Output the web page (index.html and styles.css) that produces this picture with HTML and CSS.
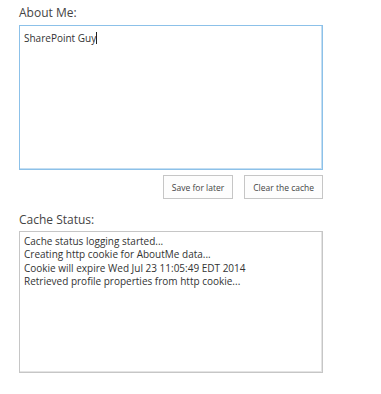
FILE: index.html
```html
<!DOCTYPE html>
<html lang="en">
<head>
    <meta charset="UTF-8">
    <title>About Me</title>
    <link rel="stylesheet" href="styles.css">
</head>
<body>
    <section class="panel">
        <div class="field-label">About Me:</div>
        <div class="about-box">SharePoint Guy<span class="caret"></span></div>
        <div class="actions">
            <button class="btn">Save for later</button>
            <button class="btn">Clear the cache</button>
        </div>
        <div class="field-label status-label">Cache Status:</div>
        <div class="status-box">
            <div>Cache status logging started...</div>
            <div>Creating http cookie for AboutMe data...</div>
            <div>Cookie will expire Wed Jul 23 11:05:49 EDT 2014</div>
            <div>Retrieved profile properties from http cookie...</div>
        </div>
    </section>
</body>
</html>
```

FILE: styles.css
```css
body {
    margin: 0;
    background-color: #fff;
    font-family: "Open Sans", sans-serif;
    color: #444;
}
.panel {
    width: 304px;
    padding: 5px 0 0 19px;
}
.field-label {
    font-size: 12px;
    line-height: 16px;
    color: #444;
    margin-bottom: 4px;
}
.about-box {
    box-sizing: border-box;
    height: 145px;
    border: 1px solid #8cc1e9;
    box-shadow: inset -1px -1px 0 #c4def2;
    padding: 5px 4px;
    font-size: 10px;
    line-height: 14px;
    color: #333;
}
.caret {
    display: inline-block;
    width: 1px;
    height: 12px;
    background-color: #222;
    vertical-align: -2px;
}
.actions {
    display: flex;
    justify-content: flex-end;
    gap: 11px;
    margin-top: 5px;
}
.btn {
    box-sizing: border-box;
    height: 24px;
    margin: 0;
    padding: 0 8px;
    background-color: #fdfdfd;
    border: 1px solid #c6c6c6;
    font-family: "Open Sans", sans-serif;
    font-size: 8.5px;
    color: #444;
}
.status-label {
    margin-top: 13px;
    margin-bottom: 3px;
}
.status-box {
    box-sizing: border-box;
    height: 142px;
    border: 1px solid #c6c6c6;
    box-shadow: inset -1px -1px 0 #e4e4e4;
    padding: 3px 4px;
    font-size: 10px;
    line-height: 13.4px;
    color: #333;
}
```
